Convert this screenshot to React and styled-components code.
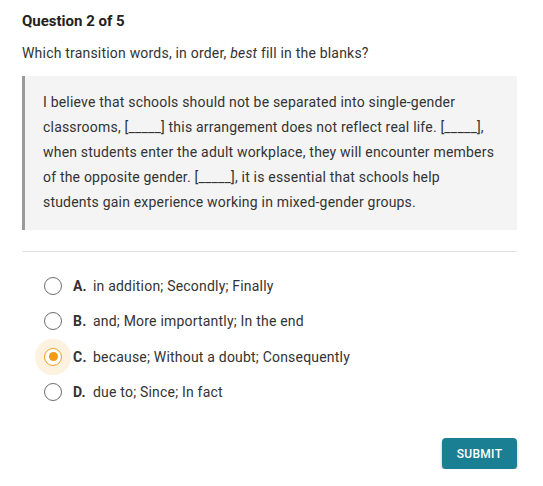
import React from "react";
import styled, { createGlobalStyle } from "styled-components";

const GlobalStyle = createGlobalStyle`
  body {
    margin: 0;
    background: #ffffff;
    font-family: Roboto, "Liberation Sans", sans-serif;
    color: #333333;
  }
`;

const options = [
  { letter: "A", text: "in addition; Secondly; Finally" },
  { letter: "B", text: "and; More importantly; In the end" },
  { letter: "C", text: "because; Without a doubt; Consequently" },
  { letter: "D", text: "due to; Since; In fact" },
];

function App() {
  const [selected, setSelected] = React.useState("C");

  return (
    <Page>
      <GlobalStyle />
      <Title>Question 2 of 5</Title>
      <Prompt>
        Which transition words, in order, <em>best</em> fill in the blanks?
      </Prompt>
      <Passage>
        I believe that schools should not be separated into single-gender
        classrooms, [_____] this arrangement does not reflect real life. [_____],
        when students enter the adult workplace, they will encounter members
        of the opposite gender. [_____], it is essential that schools help
        students gain experience working in mixed-gender groups.
      </Passage>
      <Divider />
      <OptionList>
        {options.map((opt) => (
          <Option key={opt.letter} onClick={() => setSelected(opt.letter)}>
            <RadioWrap $active={selected === opt.letter}>
              <Radio $active={selected === opt.letter} />
            </RadioWrap>
            <Letter>{opt.letter}.</Letter>
            <OptionText>{opt.text}</OptionText>
          </Option>
        ))}
      </OptionList>
      <Footer>
        <SubmitButton>SUBMIT</SubmitButton>
      </Footer>
    </Page>
  );
}

const Page = styled.div`
  padding: 12px 26px 0 22px;
`;

const Title = styled.div`
  font-size: 15px;
  font-weight: 700;
  color: #222;
  line-height: 18px;
`;

const Prompt = styled.div`
  margin-top: 14px;
  font-size: 14px;
  letter-spacing: 0.2px;
  line-height: 18px;
  color: #333;

  em {
    font-style: italic;
  }
`;

const Passage = styled.div`
  margin-top: 14px;
  background: #f4f4f4;
  border-left: 3px solid #9a9a9a;
  padding: 14px 20px 15px 18px;
  font-size: 14px;
  letter-spacing: 0.2px;
  line-height: 25px;
  color: #333;
`;

const Divider = styled.div`
  margin-top: 21px;
  height: 1px;
  background: #e2e2e2;
`;

const OptionList = styled.div`
  margin-top: 16px;
  display: flex;
  flex-direction: column;
  padding-left: 13px;
`;

const Option = styled.div`
  display: flex;
  align-items: center;
  height: 35.5px;
  font-size: 14px;
  letter-spacing: 0.2px;
  cursor: pointer;
`;

const RadioWrap = styled.div`
  width: 36px;
  height: 36px;
  border-radius: 50%;
  display: flex;
  align-items: center;
  justify-content: center;
  background: ${(p) => (p.$active ? "#fdf1df" : "transparent")};
`;

const Radio = styled.div`
  width: 18px;
  height: 18px;
  box-sizing: border-box;
  border-radius: 50%;
  border: 1px solid ${(p) => (p.$active ? "#f0a020" : "#6e6e6e")};
  background: #fff;
  display: flex;
  align-items: center;
  justify-content: center;

  &::after {
    content: "";
    width: 9px;
    height: 9px;
    border-radius: 50%;
    background: #f29a14;
    display: ${(p) => (p.$active ? "block" : "none")};
  }
`;

const Letter = styled.span`
  margin-left: 2px;
  font-weight: 700;
  color: #333;
  width: 20px;
`;

const OptionText = styled.span`
  color: #333;
`;

const Footer = styled.div`
  margin-top: 28px;
  display: flex;
  justify-content: flex-end;
`;

const SubmitButton = styled.button`
  background: #1b7f93;
  color: #fff;
  border: none;
  border-radius: 4px;
  height: 31px;
  width: 75px;
  font-family: Roboto, "Liberation Sans", sans-serif;
  font-size: 12px;
  font-weight: 500;
  letter-spacing: 0.3px;
  box-shadow: 0 2px 3px rgba(0, 0, 0, 0.3);
  cursor: pointer;
`;

export default App;
